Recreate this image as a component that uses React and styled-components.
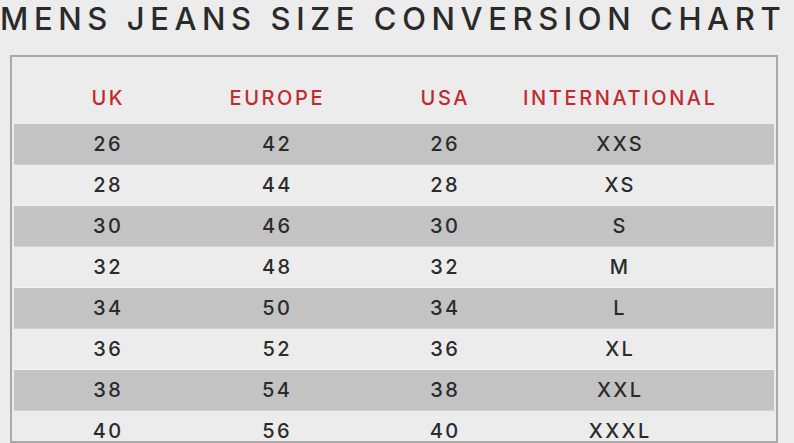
import React from 'react';
import styled, { createGlobalStyle } from 'styled-components';

const GlobalStyle = createGlobalStyle`
  html, body {
    margin: 0;
    padding: 0;
    background: #ececec;
  }
  body {
    font-family: Inter, "Open Sans", "DejaVu Sans", sans-serif;
  }
`;

const rows = [
  ['26', '42', '26', 'XXS'],
  ['28', '44', '28', 'XS'],
  ['30', '46', '30', 'S'],
  ['32', '48', '32', 'M'],
  ['34', '50', '34', 'L'],
  ['36', '52', '36', 'XL'],
  ['38', '54', '38', 'XXL'],
  ['40', '56', '40', 'XXXL'],
];

const headers = ['UK', 'EUROPE', 'USA', 'INTERNATIONAL'];

const App = () => {
  return (
    <Page>
      <GlobalStyle />
      <Title>MENS JEANS SIZE CONVERSION CHART</Title>
      <ChartBox>
        <HeaderRow>
          {headers.map((h) => (
            <HeadCell key={h}>{h}</HeadCell>
          ))}
        </HeaderRow>
        {rows.map((r, i) => (
          <DataRow key={r[0]} $shaded={i % 2 === 0}>
            {r.map((c, j) => (
              <Cell key={j}>{c}</Cell>
            ))}
          </DataRow>
        ))}
      </ChartBox>
    </Page>
  );
};

const Page = styled.div`
  width: 794px;
  height: 443px;
  overflow: hidden;
`;

const Title = styled.h1`
  margin: 0;
  height: 55px;
  padding-top: 1px;
  box-sizing: border-box;
  font-size: 31px;
  font-weight: 500;
  line-height: 36px;
  letter-spacing: 5.6px;
  color: #2a2a2a;
  white-space: nowrap;
`;

const ChartBox = styled.div`
  margin-left: 10px;
  width: 768px;
  height: 388px;
  box-sizing: border-box;
  border: 2px solid #a9a9a9;
  padding: 0 2px 2px;
  overflow: hidden;
  display: flex;
  flex-direction: column;
`;

const Grid = styled.div`
  display: grid;
  grid-template-columns: 186px 152px 184px 166px 1fr;
  align-items: center;
  flex-shrink: 0;
`;

const HeaderRow = styled(Grid)`
  height: 67px;
  padding-top: 15px;
  box-sizing: border-box;
`;

const CenteredCell = styled.div`
  display: flex;
  justify-content: center;
  white-space: nowrap;
  font-size: 20px;
  font-weight: 500;
`;

const HeadCell = styled(CenteredCell)`
  letter-spacing: 2.6px;
  padding-left: 2.6px;
  color: #c12a30;
`;

const DataRow = styled(Grid)`
  height: 41px;
  background: ${(p) => (p.$shaded ? '#c3c3c3' : '#ececec')};
  border-bottom: 1px solid ${(p) => (p.$shaded ? '#d2d2d2' : '#f3f3f3')};
  box-sizing: border-box;
`;

const Cell = styled(CenteredCell)`
  letter-spacing: 2.4px;
  padding-left: 2.4px;
  color: #2b2b2b;
`;

export default App;
